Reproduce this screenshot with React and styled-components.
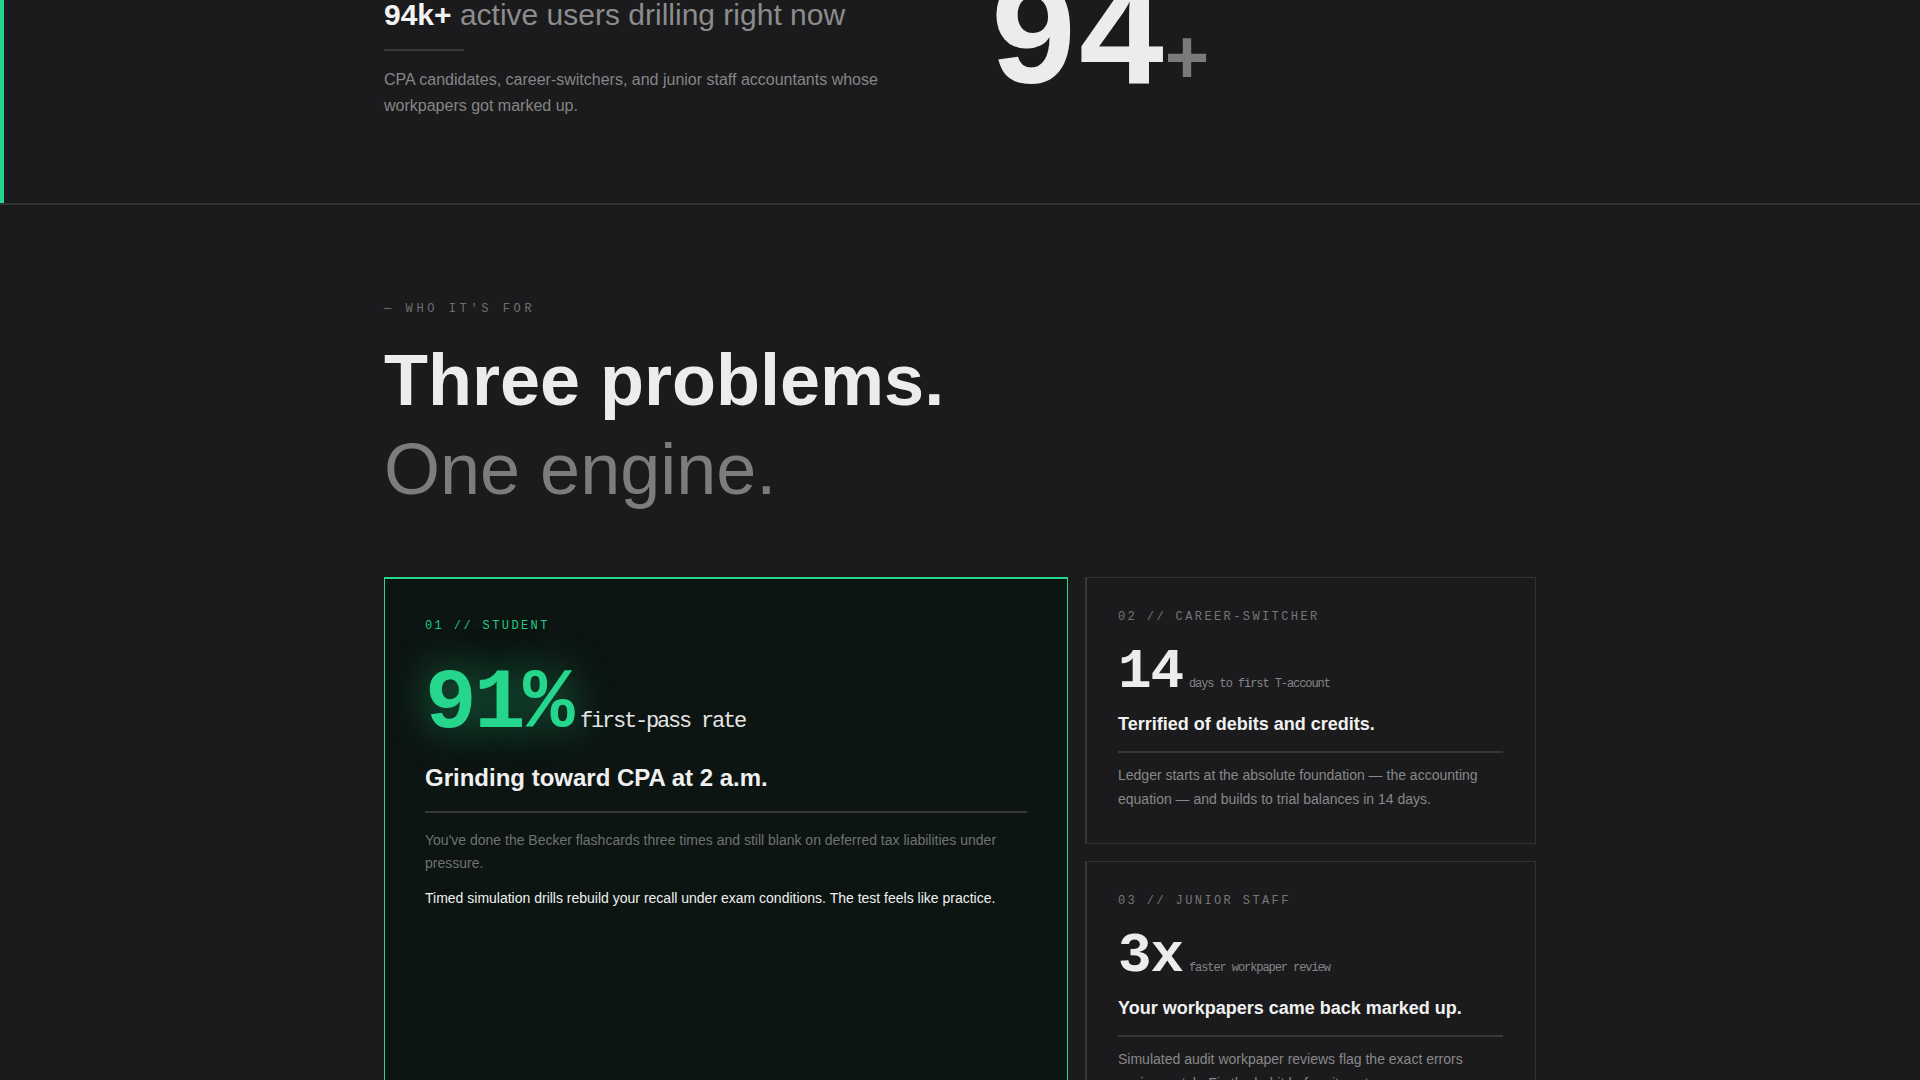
import React from 'react';
import styled, { createGlobalStyle } from 'styled-components';

const mono = '"Liberation Mono", "DejaVu Sans Mono", monospace';
const green = '#25d68c';

const GlobalStyle = createGlobalStyle`
  html {
    scrollbar-width: none;
  }

  body {
    margin: 0;
    background: #1b1b1d;
    color: #ececec;
    font-family: "Liberation Sans", Arial, sans-serif;
    overflow-x: hidden;
  }

  *, *::before, *::after {
    box-sizing: border-box;
  }
`;

const Container = styled.div`
  max-width: 1152px;
  margin: 0 auto;
`;

/* hero stats strip (page is scrolled, top is cut) */

const Hero = styled.section`
  box-shadow: inset 4px 0 0 ${green};
  border-bottom: 2px solid #333335;
  padding-bottom: 83px;
`;

const HeroGrid = styled(Container)`
  display: grid;
  grid-template-columns: 1fr 1fr;
  column-gap: 56px;
  align-items: start;
`;

const StatLine = styled.p`
  margin: -3px 0 0;
  font-size: 30px;
  line-height: 1.2;
  color: #8c8c8c;

  strong {
    color: #f2f2f2;
    font-weight: 700;
  }
`;

const ShortRule = styled.hr`
  width: 80px;
  height: 2px;
  margin: 16px 0 0;
  border: 0;
  background: #3a3a3c;
`;

const HeroText = styled.p`
  margin: 16px 0 0;
  max-width: 520px;
  font-size: 16px;
  line-height: 1.65;
  color: #858585;
`;

const BigStat = styled.div`
  margin-top: -14px;
  font-family: ${mono};
  font-weight: 700;
  font-size: 152px;
  line-height: 0.75;
  letter-spacing: -0.02em;
  color: #ececec;

  span {
    font-size: 76px;
    letter-spacing: 0;
    color: #7a7a7a;
  }
`;

/* who it's for */

const Audience = styled.section`
  padding-top: 97px;
`;

const Eyebrow = styled.div`
  font-family: ${mono};
  font-size: 12px;
  line-height: 1.2;
  letter-spacing: 0.3em;
  text-transform: uppercase;
  color: #6f6f6f;
`;

const Title = styled.h2`
  margin: 20px 0 0;
  font-size: 72px;
  line-height: 1.24;
  font-weight: 700;
  color: #ececec;

  span {
    display: block;
    font-weight: 400;
    color: #7c7c7c;
  }
`;

const Cards = styled.div`
  margin-top: 62px;
  display: grid;
  grid-template-columns: minmax(0, 684fr) minmax(0, 451fr);
  gap: 17px;
`;

const Card = styled.article`
  grid-row: ${(p) => (p.$featured ? 'span 2' : 'auto')};
  padding: ${(p) => (p.$featured ? '40px 40px 40px' : '32px 32px 32px 31px')};
  background: ${(p) => (p.$featured ? '#0c1511' : 'transparent')};
  border: 1px solid ${(p) => (p.$featured ? green : '#333335')};
  border-top-width: ${(p) => (p.$featured ? '2px' : '1px')};
  border-left-width: ${(p) => (p.$featured ? '1px' : '2px')};
  border-left-color: ${(p) => (p.$featured ? green : '#38383a')};
`;

const Tag = styled.div`
  font-family: ${mono};
  font-size: 12px;
  line-height: 1.2;
  letter-spacing: 0.2em;
  text-transform: uppercase;
  color: ${(p) => (p.$featured ? '#22c985' : '#767676')};
`;

const Metric = styled.div`
  display: flex;
  align-items: baseline;
  gap: ${(p) => (p.$featured ? '8px' : '6px')};
  margin-top: ${(p) => (p.$featured ? '28px' : '20px')};
`;

const Figure = styled.span`
  font-family: ${mono};
  font-weight: 700;
  line-height: 1;
  font-size: ${(p) => (p.$featured ? '86px' : '56px')};
  letter-spacing: ${(p) => (p.$featured ? '-0.03em' : '-0.02em')};
  color: ${(p) => (p.$featured ? green : '#ececec')};
  text-shadow: ${(p) => (p.$featured ? '0 0 40px rgba(37, 214, 140, 0.55)' : 'none')};
`;

const Unit = styled.span`
  font-family: ${mono};
  line-height: 1;
  font-size: ${(p) => (p.$featured ? '22px' : '12px')};
  letter-spacing: ${(p) => (p.$featured ? '-0.1em' : '-0.09em')};
  color: ${(p) => (p.$featured ? '#e4e4e4' : '#858585')};
`;

const CardTitle = styled.h3`
  margin: ${(p) => (p.$featured ? '15px 0 0' : '13px 0 0')};
  font-size: ${(p) => (p.$featured ? '24px' : '18px')};
  line-height: 1.3;
  font-weight: 700;
  color: #f0f0f0;
`;

const Rule = styled.hr`
  height: 2px;
  margin: ${(p) => (p.$featured ? '18px 0 16px' : '15px 0 11px')};
  border: 0;
  background: #38383a;
`;

const Body = styled.p`
  margin: 0;
  font-size: 14px;
  line-height: 1.65;
  color: ${(p) => (p.$featured ? '#727272' : '#888888')};

  & + & {
    margin-top: 12px;
    color: #f0f0f0;
  }
`;

const audiences = [
  {
    id: '01',
    tag: 'Student',
    figure: '91%',
    unit: 'first-pass rate',
    title: 'Grinding toward CPA at 2 a.m.',
    body: [
      "You've done the Becker flashcards three times and still blank on deferred tax liabilities under pressure.",
      'Timed simulation drills rebuild your recall under exam conditions. The test feels like practice.',
    ],
    featured: true,
  },
  {
    id: '02',
    tag: 'Career-switcher',
    figure: '14',
    unit: 'days to first T-account',
    title: 'Terrified of debits and credits.',
    body: [
      'Ledger starts at the absolute foundation — the accounting equation — and builds to trial balances in 14 days.',
    ],
  },
  {
    id: '03',
    tag: 'Junior staff',
    figure: '3x',
    unit: 'faster workpaper review',
    title: 'Your workpapers came back marked up.',
    body: [
      'Simulated audit workpaper reviews flag the exact errors seniors catch. Fix the habit before it costs you.',
    ],
  },
];

const AudienceCard = ({ item }) => {
  const f = item.featured;
  return (
    <Card $featured={f}>
      <Tag $featured={f}>
        {item.id} // {item.tag}
      </Tag>
      <Metric $featured={f}>
        <Figure $featured={f}>{item.figure}</Figure>
        <Unit $featured={f}>{item.unit}</Unit>
      </Metric>
      <CardTitle $featured={f}>{item.title}</CardTitle>
      <Rule $featured={f} />
      {item.body.map((text) => (
        <Body key={text} $featured={f}>
          {text}
        </Body>
      ))}
    </Card>
  );
};

export default function App() {
  return (
    <>
      <GlobalStyle />
      <Hero>
        <HeroGrid>
          <div>
            <StatLine>
              <strong>94k+</strong> active users drilling right now
            </StatLine>
            <ShortRule />
            <HeroText>
              CPA candidates, career-switchers, and junior staff accountants whose workpapers got
              marked up.
            </HeroText>
          </div>
          <BigStat>
            94<span>+</span>
          </BigStat>
        </HeroGrid>
      </Hero>

      <Audience>
        <Container>
          <Eyebrow>— Who it's for</Eyebrow>
          <Title>
            Three problems.
            <span>One engine.</span>
          </Title>
          <Cards>
            {audiences.map((item) => (
              <AudienceCard key={item.id} item={item} />
            ))}
          </Cards>
        </Container>
      </Audience>
    </>
  );
}
